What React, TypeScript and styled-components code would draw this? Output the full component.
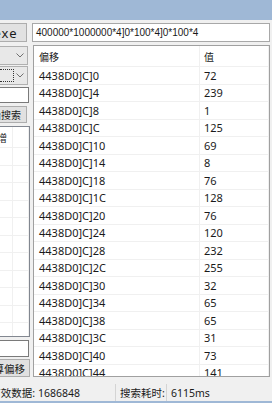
import React from 'react';
import styled, { createGlobalStyle } from 'styled-components';

const GlobalStyle = createGlobalStyle`
  html, body {
    margin: 0;
    padding: 0;
  }
  body {
    background: #f0f0f0;
    font-family: "Noto Sans", "Noto Sans CJK SC", sans-serif;
    color: #1a1a1a;
  }
`;

const Window = styled.div`
  width: 272px;
  height: 403px;
  box-sizing: border-box;
  display: flex;
  flex-direction: column;
  overflow: hidden;
  background: #f0f0f0;
  border-bottom: 2px solid #9fb8d6;
`;

const TitleBar = styled.div`
  flex: none;
  height: 20px;
  background: #9fb8d6;
`;

const Body = styled.div`
  flex: 1;
  min-height: 0;
  display: flex;
  flex-direction: column;
  padding: 3px 2px 0 0;
`;

const TopRow = styled.div`
  flex: none;
  display: flex;
  gap: 5px;
  height: 19px;
`;

// text is clipped on the left, like the window edge cuts it
const WinButton = styled.div<{ $w: number; $h: number; $pr: number; $fs: number; $mt: number; $ls?: number }>`
  flex: none;
  width: ${p => p.$w}px;
  height: ${p => p.$h}px;
  margin-top: ${p => p.$mt}px;
  box-sizing: border-box;
  display: flex;
  align-items: center;
  justify-content: flex-end;
  padding-right: ${p => p.$pr}px;
  overflow: hidden;
  white-space: nowrap;
  background: #e1e1e1;
  border: 1px solid #adadad;
  border-left: none;
  font-size: ${p => p.$fs}px;
  letter-spacing: ${p => p.$ls ?? 0}px;
`;

const PathInput = styled.div`
  flex: 1;
  box-sizing: border-box;
  display: flex;
  align-items: center;
  padding-left: 3px;
  background: #fff;
  border: 1px solid #a8a8a8;
  font-family: "Liberation Sans", Arial, sans-serif;
  font-size: 10px;
  white-space: nowrap;
  overflow: hidden;
`;

const MainRow = styled.div`
  flex: none;
  display: flex;
  gap: 3px;
  height: 332px;
  margin-top: 3px;
`;

const LeftCol = styled.div`
  flex: none;
  width: 30px;
  display: flex;
  flex-direction: column;
`;

const Combo = styled.div<{ $mt: number }>`
  flex: none;
  width: 28px;
  height: 19px;
  margin-top: ${p => p.$mt}px;
  box-sizing: border-box;
  display: flex;
  align-items: center;
  justify-content: space-between;
  padding-right: 3px;
  background: #e8e8e8;
  border: 1px solid #b0b0b0;
  border-left: none;
`;

const FocusRect = styled.div`
  width: 14px;
  height: 13px;
  box-sizing: border-box;
  border: 1px dotted #333;
  border-left: none;
`;

const Chevron = () => (
  <svg width="8" height="5" viewBox="0 0 8 5">
    <path d="M0.5 0.5 L4 4 L7.5 0.5" fill="none" stroke="#707070" strokeWidth="1" />
  </svg>
);

const SmallInput = styled.div<{ $mt: number; $h: number }>`
  flex: none;
  width: 29px;
  height: ${p => p.$h}px;
  margin-top: ${p => p.$mt}px;
  box-sizing: border-box;
  background: #fff;
  border: 1px solid #7a7a7a;
  border-left: none;
`;

const ListBox = styled.div`
  flex: none;
  width: 30px;
  height: 211px;
  margin-top: 3px;
  box-sizing: border-box;
  background: #fff;
  border: 1px solid #828790;
  border-left: none;
  overflow: hidden;
`;

const ListRow = styled.div<{ $h: number }>`
  height: ${p => p.$h}px;
  box-sizing: border-box;
  display: grid;
  grid-template-columns: 13px 1fr;
  border-bottom: 1px solid #f0f0f0;
`;

const ListCell = styled.div<{ $pr?: number }>`
  display: flex;
  align-items: center;
  justify-content: flex-end;
  padding-right: ${p => p.$pr ?? 0}px;
  overflow: hidden;
  white-space: nowrap;
  border-right: 1px solid #f0f0f0;
  font-size: 10px;
`;

const Table = styled.div`
  flex: 1;
  box-sizing: border-box;
  background: #fff;
  border: 1px solid #a0a0a0;
  overflow: hidden;
`;

const Row = styled.div<{ $head?: boolean }>`
  height: ${p => (p.$head ? 21 : 17.5)}px;
  box-sizing: border-box;
  display: grid;
  grid-template-columns: 166px 1fr;
  border-bottom: 1px solid #f0f0f0;
`;

const Cell = styled.div<{ $head?: boolean; $pl: number }>`
  display: flex;
  align-items: center;
  padding-left: ${p => p.$pl}px;
  font-size: ${p => (p.$head ? 10 : 11)}px;
  white-space: nowrap;
  border-right: 1px solid #f0f0f0;
`;

const StatusBar = styled.div`
  flex: 1;
  display: flex;
  align-items: flex-end;
  font-size: 10.5px;
`;

const StatusItem = styled.div<{ $w: number; $sep?: boolean; $clip?: boolean; $pl: number }>`
  flex: none;
  width: ${p => p.$w}px;
  height: 17px;
  box-sizing: border-box;
  display: flex;
  align-items: center;
  justify-content: ${p => (p.$clip ? 'flex-end' : 'flex-start')};
  padding-left: ${p => p.$pl}px;
  border-left: ${p => (p.$sep ? '1px solid #d4d4d4' : 'none')};
  overflow: hidden;
  white-space: nowrap;
`;

const rows: [string, number][] = [
  ['0', 72], ['4', 239], ['8', 1], ['C', 125], ['10', 69], ['14', 8],
  ['18', 76], ['1C', 128], ['20', 76], ['24', 120], ['28', 232], ['2C', 255],
  ['30', 32], ['34', 65], ['38', 65], ['3C', 31], ['40', 73], ['44', 141],
  ['48', 12],
];

export default function App() {
  return (
    <>
      <GlobalStyle />
      <Window>
        <TitleBar />
        <Body>
          <TopRow>
            <WinButton $w={27} $h={19} $pr={8.5} $fs={13} $ls={1} $mt={0}>选择exe</WinButton>
            <PathInput>400000*1000000*4]0*100*4]0*100*4</PathInput>
          </TopRow>
          <MainRow>
            <LeftCol>
              <Combo $mt={1}>
                <span />
                <Chevron />
              </Combo>
              <Combo $mt={1}>
                <FocusRect />
                <Chevron />
              </Combo>
              <SmallInput $mt={2} $h={16} />
              <WinButton $w={27} $h={17} $pr={5} $fs={10} $mt={3}>开始搜索</WinButton>
              <ListBox>
                <ListRow $h={21}>
                  <ListCell $pr={5}>基址增</ListCell>
                  <ListCell />
                </ListRow>
                {Array.from({ length: 11 }).map((_, i) => (
                  <ListRow key={i} $h={17.5}>
                    <ListCell />
                    <ListCell />
                  </ListRow>
                ))}
              </ListBox>
              <SmallInput $mt={3} $h={17} />
              <WinButton $w={30} $h={18} $pr={4} $fs={10.5} $mt={2}>计算偏移</WinButton>
            </LeftCol>
            <Table>
              <Row $head>
                <Cell $head $pl={5}>偏移</Cell>
                <Cell $head $pl={4}>值</Cell>
              </Row>
              {rows.map(([off, val]) => (
                <Row key={off}>
                  <Cell $pl={5}>{`4438D0]C]${off}`}</Cell>
                  <Cell $pl={4}>{val}</Cell>
                </Row>
              ))}
            </Table>
          </MainRow>
          <StatusBar>
            <StatusItem $w={35} $pl={0} $clip>有效数据:</StatusItem>
            <StatusItem $w={80} $pl={3}>1686848</StatusItem>
            <StatusItem $w={51} $pl={4} $sep>搜索耗时:</StatusItem>
            <StatusItem $w={104} $pl={4} $sep>6115ms</StatusItem>
          </StatusBar>
        </Body>
      </Window>
    </>
  );
}
